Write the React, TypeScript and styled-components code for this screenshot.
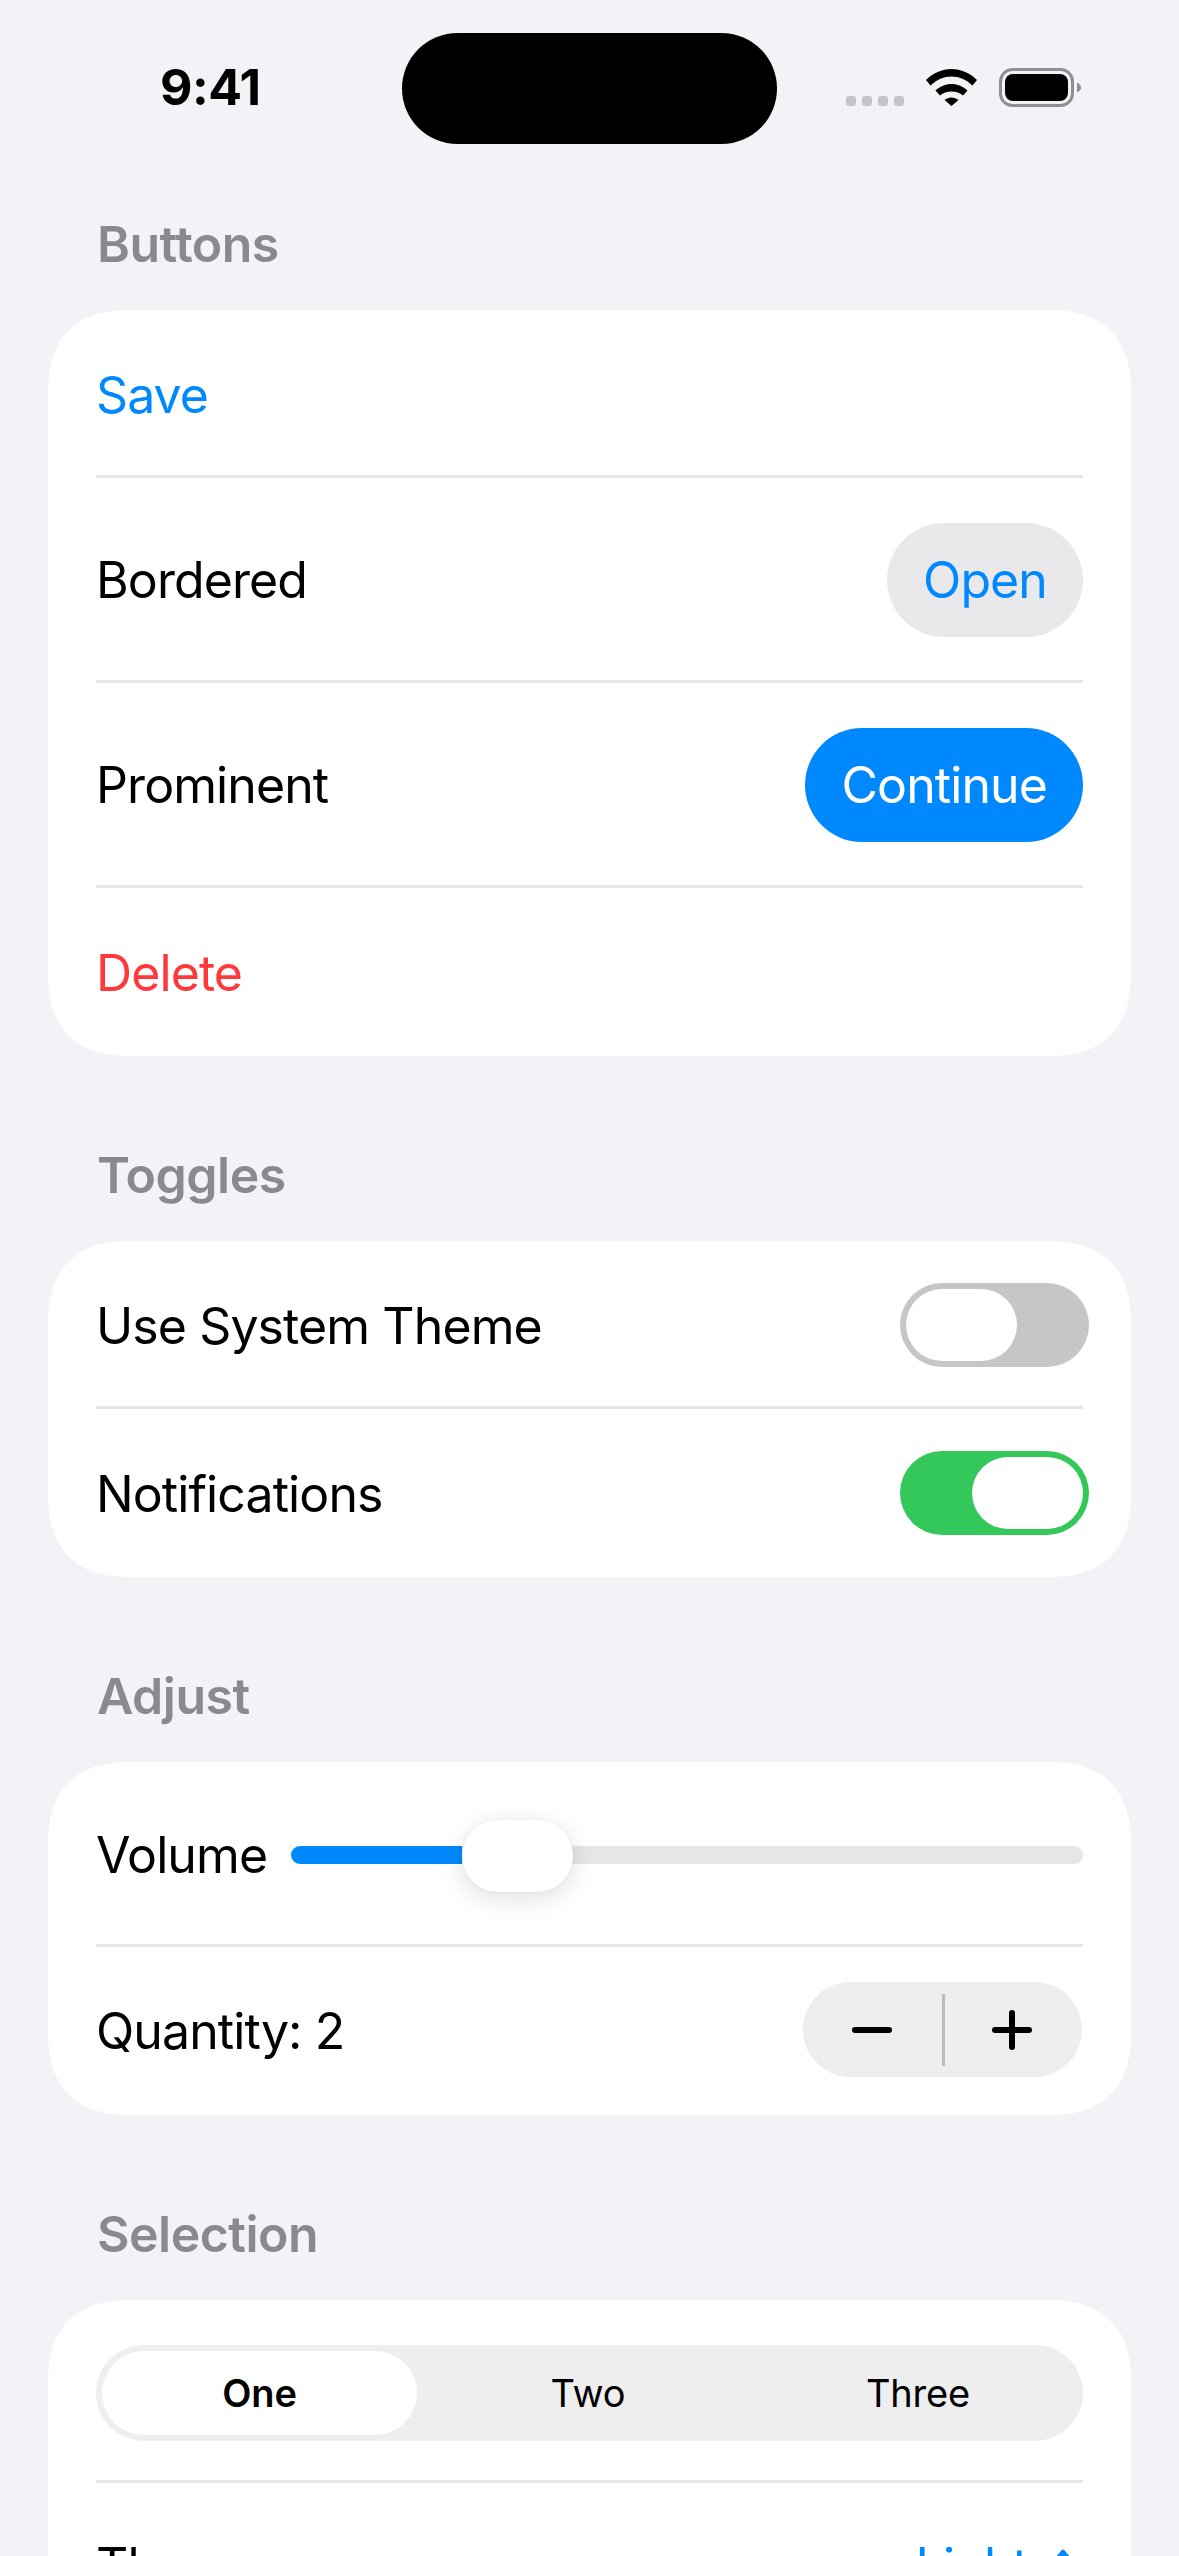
import React from 'react'
import styled, { createGlobalStyle } from 'styled-components'

const GlobalStyle = createGlobalStyle`
  html, body { margin: 0; padding: 0; background: #f2f2f7; }
  body { width: 1179px; height: 2556px; overflow: hidden; font-family: Inter, "Noto Sans", sans-serif; }
`

const Screen = styled.div`
  width: 1179px;
  height: 2556px;
  overflow: hidden;
  background: #f2f2f7;
`

const StatusBar = styled.div`
  height: 125px;
  display: flex;
  align-items: flex-start;
  box-sizing: border-box;
  padding: 33px 0 0 160px;
`

const Time = styled.div`
  width: 242px;
  margin-top: 24px;
  font-size: 50px;
  line-height: 60px;
  font-weight: 700;
  letter-spacing: -0.5px;
  color: #000;
`

const Island = styled.div`
  width: 375px;
  height: 111px;
  border-radius: 56px;
  background: #000;
`

const StatusIcons = styled.div`
  display: flex;
  align-items: flex-start;
  margin: 35px 0 0 69px;
`

const Dots = styled.div`
  display: flex;
  gap: 6px;
  margin-top: 28px;
  margin-right: 22px;
`

const Dot = styled.span`
  width: 10px;
  height: 10px;
  border-radius: 3px;
  background: #c4c4c8;
`

const Wifi = styled.svg`
  width: 51px;
  height: 37px;
  margin-top: 1px;
  margin-right: 22px;
`

const Battery = styled.svg`
  width: 82px;
  height: 39px;
`

const Title = styled.div`
  height: 185px;
  box-sizing: border-box;
  padding: 0 0 36px 97px;
  display: flex;
  align-items: flex-end;
  font-size: 50px;
  line-height: 60px;
  font-weight: 600;
  letter-spacing: -0.5px;
  color: #8a8a8e;
`

const Card = styled.div`
  margin: 0 48px;
  padding: 0 48px;
  border-radius: 84px;
  corner-shape: superellipse(1.3);
  background: #fff;
`

const Row = styled.div<{ $h: number; $top?: number }>`
  height: ${(p) => p.$h}px;
  box-sizing: border-box;
  padding-top: ${(p) => p.$top ?? 0}px;
  display: flex;
  align-items: center;
  justify-content: space-between;
  font-size: 50px;
  line-height: 60px;
  letter-spacing: -0.9px;
  color: #000;
`

const Divider = styled.div`
  height: 3px;
  background: #e6e6e8;
`

const Label = styled.span<{ $color?: string; $up?: boolean }>`
  margin-top: ${(p) => (p.$up ? -1 : 1)}px;
  color: ${(p) => p.$color ?? '#000'};
`

const Pill = styled.div<{ $primary?: boolean }>`
  height: 114px;
  margin-top: 2px;
  padding: 0 36px;
  display: flex;
  align-items: center;
  border-radius: 57px;
  background: ${(p) => (p.$primary ? '#0088ff' : '#e9e9eb')};
  color: ${(p) => (p.$primary ? '#fff' : '#0088ff')};
`

const Toggle = styled.div<{ $on?: boolean }>`
  width: 189px;
  height: 84px;
  margin-right: -6px;
  padding: 6px;
  box-sizing: border-box;
  display: flex;
  justify-content: ${(p) => (p.$on ? 'flex-end' : 'flex-start')};
  border-radius: 42px;
  background: ${(p) => (p.$on ? '#34c759' : '#c6c6c8')};
`

const Knob = styled.div`
  width: 111px;
  height: 72px;
  border-radius: 36px;
  background: #fff;
`

const Slider = styled.div`
  width: 792px;
  height: 18px;
  border-radius: 9px;
  background: #e6e6e8;
  display: flex;
  align-items: center;
`

const SliderFill = styled.div`
  height: 18px;
  border-radius: 9px 0 0 9px;
  background: #0088ff;
`

const SliderKnob = styled(Knob)`
  flex: none;
  margin-top: 3px;
  box-shadow: 0 6px 26px rgba(0, 0, 0, 0.13), 0 0 4px rgba(0, 0, 0, 0.04);
`

const Stepper = styled.div`
  width: 279px;
  height: 95px;
  margin: -3px 1px 0 0;
  display: grid;
  grid-template-columns: 138px 3px 132px;
  column-gap: 1px;
  align-items: center;
  border-radius: 48px;
  background: #eeeeef;
`

const StepButton = styled.div`
  display: flex;
  justify-content: center;
`

const StepIcon = styled.svg`
  width: 40px;
  height: 40px;
`

const StepLine = styled.div`
  height: 72px;
  background: #bcbcbe;
`

const Segments = styled.div`
  width: 100%;
  height: 96px;
  box-sizing: border-box;
  padding: 6px;
  display: grid;
  grid-template-columns: repeat(3, 315px);
  justify-content: space-between;
  border-radius: 48px;
  background: #eeeeef;
`

const Segment = styled.div<{ $active?: boolean }>`
  display: flex;
  align-items: center;
  justify-content: center;
  padding-right: ${(p) => (p.$active ? 0 : 3)}px;
  border-radius: 42px;
  font-size: 38px;
  letter-spacing: -0.2px;
  font-weight: ${(p) => (p.$active ? 600 : 400)};
  color: #000;
  background: ${(p) => (p.$active ? '#fff' : 'transparent')};
`

const Picker = styled.div`
  display: flex;
  align-items: center;
  gap: 23px;
  margin-right: 8px;
`

const Chevrons = styled.svg`
  width: 24px;
  height: 52px;
  margin-top: 10px;
`

function App() {
  return (
    <Screen>
      <GlobalStyle />
      <StatusBar>
        <Time>9:41</Time>
        <Island />
        <StatusIcons>
          <Dots>
            <Dot />
            <Dot />
            <Dot />
            <Dot />
          </Dots>
          <Wifi viewBox="0 0 51 37">
            <path d="M0 11C7 4 16 0 25.5 0C35 0 44 4 51 11L46.5 16.5C40 10.5 33 7.5 25.5 7.5C18 7.5 11 10.5 4.5 16.5Z" fill="#000" />
            <path d="M9.5 21.5C14 17.5 19.5 15 25.5 15C31.5 15 37 17.5 41.5 21.5L37 26.5C34 24 30 22.5 25.5 22.5C21 22.5 17 24 14 26.5Z" fill="#000" />
            <path d="M18.5 31C20.5 29.5 23 28.5 25.5 28.5C28 28.5 30.5 29.5 32.5 31L25.5 37Z" fill="#000" />
          </Wifi>
          <Battery viewBox="0 0 82 39">
            <rect x="1.5" y="1.5" width="72" height="36" rx="12" fill="none" stroke="#8e8e93" strokeWidth="3" />
            <rect x="6" y="6" width="63" height="27" rx="8" fill="#000" />
            <path d="M78 14.5C80.5 15.5 82 17.5 82 19.5C82 21.5 80.5 23.5 78 24.5Z" fill="#8e8e93" />
          </Battery>
        </StatusIcons>
      </StatusBar>

      <Title>Buttons</Title>
      <Card>
        <Row $h={165} $top={3}>
          <Label $color="#0088ff">Save</Label>
        </Row>
        <Divider />
        <Row $h={202}>
          <Label>Bordered</Label>
          <Pill>Open</Pill>
        </Row>
        <Divider />
        <Row $h={202}>
          <Label>Prominent</Label>
          <Pill $primary>Continue</Pill>
        </Row>
        <Divider />
        <Row $h={168}>
          <Label $color="#ff383c">Delete</Label>
        </Row>
      </Card>

      <Title>Toggles</Title>
      <Card>
        <Row $h={165} $top={3}>
          <Label>Use System Theme</Label>
          <Toggle>
            <Knob />
          </Toggle>
        </Row>
        <Divider />
        <Row $h={168}>
          <Label>Notifications</Label>
          <Toggle $on>
            <Knob />
          </Toggle>
        </Row>
      </Card>

      <Title>Adjust</Title>
      <Card>
        <Row $h={182} $top={3}>
          <Label>Volume</Label>
          <Slider>
            <SliderFill style={{ width: 171 }} />
            <SliderKnob />
          </Slider>
        </Row>
        <Divider />
        <Row $h={168}>
          <Label $up>Quantity: 2</Label>
          <Stepper>
            <StepButton>
              <StepIcon viewBox="0 0 40 40">
                <path d="M3 20H37" stroke="#000" strokeWidth="6" strokeLinecap="round" />
              </StepIcon>
            </StepButton>
            <StepLine />
            <StepButton>
              <StepIcon viewBox="0 0 40 40">
                <path d="M3 20H37M20 3V37" stroke="#000" strokeWidth="6" strokeLinecap="round" />
              </StepIcon>
            </StepButton>
          </Stepper>
        </Row>
      </Card>

      <Title>Selection</Title>
      <Card>
        <Row $h={180} $top={6}>
          <Segments>
            <Segment $active>One</Segment>
            <Segment>Two</Segment>
            <Segment>Three</Segment>
          </Segments>
        </Row>
        <Divider />
        <Row $h={165}>
          <Label>Theme</Label>
          <Picker>
            <Label $color="#0088ff">Light</Label>
            <Chevrons viewBox="0 0 24 52">
              <path d="M3 18L12 7L21 18M3 34L12 45L21 34" fill="none" stroke="#0088ff" strokeWidth="4.5" strokeLinecap="round" strokeLinejoin="round" />
            </Chevrons>
          </Picker>
        </Row>
      </Card>
    </Screen>
  )
}

export default App
